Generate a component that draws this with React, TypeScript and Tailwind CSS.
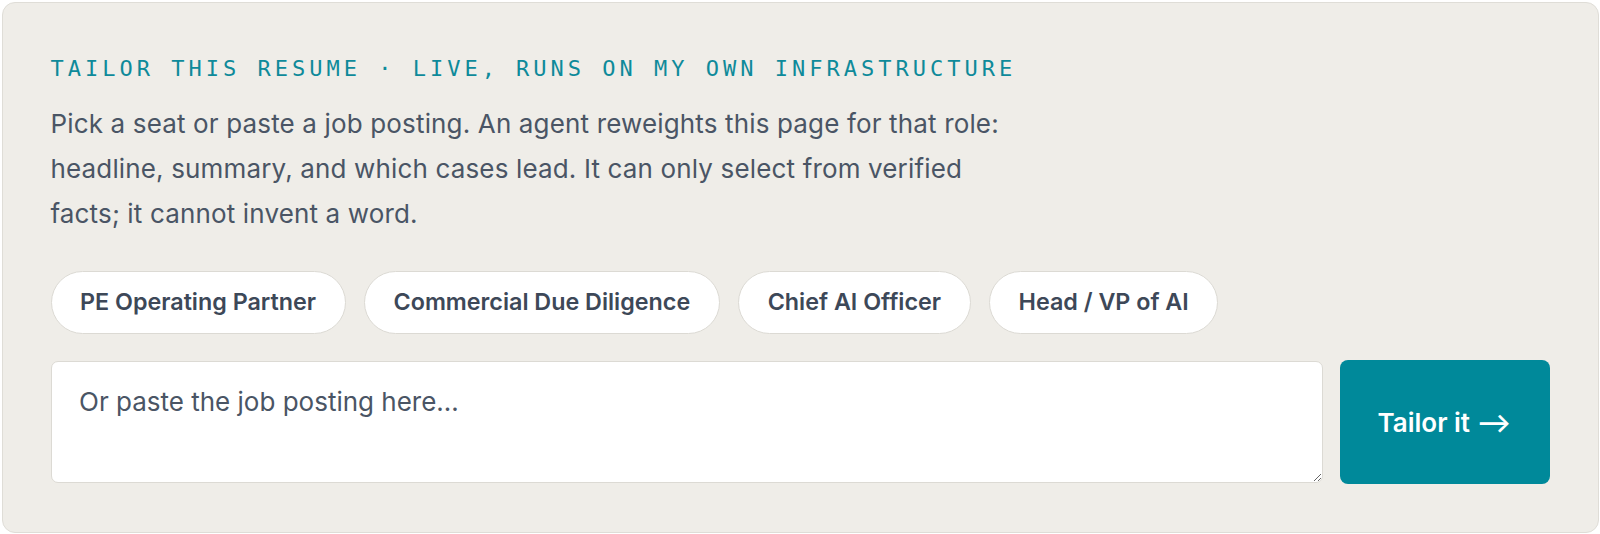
const chips = ["PE Operating Partner", "Commercial Due Diligence", "Chief AI Officer", "Head / VP of AI"];

export default function App() {
  return (
    <div className="w-[1600px] h-[534px] bg-white pl-[1.5px] pt-[2px]">
      <section className="w-[1597px] h-[531px] rounded-[13px] border border-[#dfddd7] bg-[#efede8] px-12 pt-[49px] font-[family-name:'Inter',sans-serif]">
        <p className="font-[family-name:'DejaVu_Sans_Mono',monospace] text-[22px] leading-[33px] tracking-[4px] text-[#0e8a9a] whitespace-nowrap">
          TAILOR THIS RESUME · LIVE, RUNS ON MY OWN INFRASTRUCTURE
        </p>
        <p className="mt-[16px] w-[965px] text-[26px] leading-[45px] tracking-[0.15px] text-[#4a5565]">
          Pick a seat or paste a job posting. An agent reweights this page for that role: headline, summary, and which
          cases lead. It can only select from verified facts; it cannot invent a word.
        </p>
        <div className="mt-[35px] flex gap-[18.5px]">
          {chips.map((c) => (
            <button
              key={c}
              className="h-[63px] rounded-full border-[1.5px] border-[#dcdad4] bg-white px-[28.5px] text-[23.3px] font-semibold text-[#3d4858]"
            >
              {c}
            </button>
          ))}
        </div>
        <div className="mt-[26px] flex items-center gap-[17px]">
          <textarea
            placeholder="Or paste the job posting here…"
            className="h-[122px] flex-1 rounded-[7px] border-[1.5px] border-[#dcdad4] bg-white px-[27.5px] py-[22px] text-[26px] leading-[36px] text-[#4a5565] placeholder:text-[#4a5565] outline-none"
          />
          <button className="h-[124px] w-[210px] rounded-[8px] bg-[#00899a] text-[26px] font-semibold text-white">
            Tailor it ⟶
          </button>
        </div>
      </section>
    </div>
  );
}
